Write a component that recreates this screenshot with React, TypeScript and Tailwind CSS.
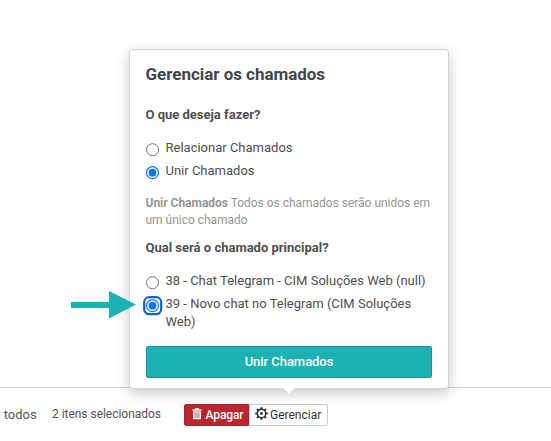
function Radio({ checked = false, focused = false }: { checked?: boolean; focused?: boolean }) {
  return (
    <svg viewBox="0 0 20 20" className="-ml-[3px] mt-[1px] h-5 w-5 shrink-0" role="radio" aria-checked={checked}>
      {focused && <rect x="1.2" y="1.2" width="17" height="17" rx="5.2" fill="#fff" stroke="#0f62d0" strokeWidth="2.2" />}
      <circle cx="9.5" cy="9.7" r="6" fill="#fff" stroke={checked ? "#0f75f5" : "#767676"} strokeWidth={checked ? 1.2 : 1} />
      {checked && <circle cx="9.5" cy="9.7" r="3.9" fill="#0f75ff" />}
    </svg>
  );
}

function Option({ text, checked, focused }: { text: string; checked?: boolean; focused?: boolean }) {
  return (
    <label className="flex items-start">
      <Radio checked={checked} focused={focused} />
      <span className="ml-[2.5px] text-[13px] leading-[18px] text-[#505050]">{text}</span>
    </label>
  );
}

function Popover() {
  return (
    <section className="absolute left-[129px] top-[49px] h-[340px] w-[320px] rounded-[4px] border border-[#d4d4d4] bg-white px-4 pt-3 shadow-[0_4px_14px_rgba(0,0,0,0.22)]">
      <h1 className="-ml-[0.5px] text-[17px] font-bold leading-6 tracking-[-0.03px] text-[#41464d]">Gerenciar os chamados</h1>
      <h2 className="-ml-[0.5px] mt-[19px] text-[13px] font-bold leading-5 tracking-[-0.01px] text-[#505050]">O que deseja fazer?</h2>
      <div className="mt-[14px] flex h-[42px] flex-col gap-[2px]">
        <Option text="Relacionar Chamados" />
        <Option text="Unir Chamados" checked />
      </div>
      <p className="-ml-[0.5px] mt-[14px] whitespace-nowrap text-[12px] leading-[17px] tracking-[-0.02px] text-[#969696]">
        <b>Unir Chamados</b> Todos os chamados serão unidos em
        <br />
        um único chamado
      </p>
      <h2 className="-ml-[0.5px] mt-[9px] text-[13px] font-bold leading-5 text-[#505050]">Qual será o chamado principal?</h2>
      <div className="mt-[14px] flex h-[60px] flex-col gap-[2px]">
        <Option text="38 - Chat Telegram - CIM Soluções Web (null)" />
        <Option text="39 - Novo chat no Telegram (CIM Soluções Web)" checked focused />
      </div>
      <button className="mt-[14px] block h-8 w-[286px] rounded-[2px] border border-[#16989a] bg-[#1cb2b2] text-[13px] font-medium tracking-[-0.05px] text-white">
        Unir Chamados
      </button>
      <svg viewBox="0 0 14 7" className="absolute left-[152px] top-[337px] h-[7px] w-[14px]">
        <path d="M0 0H14L7 6.5Z" fill="#fff" />
      </svg>
    </section>
  );
}

function TrashIcon() {
  return (
    <svg viewBox="0 0 10 12" className="-mt-[2px] h-3 w-[10px] shrink-0">
      <path d="M.4 1.4H2.9V.3H7.1V1.4H9.6V2.8H.4Z" fill="#fff" />
      <path d="M1 3.4H9V11.2H1Z" fill="#fff" />
      <path d="M3.1 4.4V10M5 4.4V10M6.9 4.4V10" stroke="#b8272d" strokeWidth="0.8" />
    </svg>
  );
}

function GearIcon() {
  return (
    <svg viewBox="0 0 12 12" className="-mt-[3px] h-[13px] w-[13px] shrink-0" fill="none" stroke="#333">
      <circle cx="6" cy="6" r="3.9" strokeWidth="1.3" />
      <circle cx="6" cy="6" r="1.3" fill="#333" stroke="none" />
      <path d="M6 .2V2M6 10V11.8M.2 6H2M10 6H11.8M1.9 1.9L3.2 3.2M8.8 8.8L10.1 10.1M1.9 10.1L3.2 8.8M8.8 3.2L10.1 1.9" strokeWidth="2" />
    </svg>
  );
}

export default function App() {
  return (
    <div className="relative flex h-[441px] w-[551px] flex-col overflow-hidden bg-white font-[Roboto,sans-serif]">
      <main className="flex-1" />
      <footer className="flex h-[54px] items-start border-t border-[#d2d2d2] pt-4">
        <span className="-ml-[4px] mt-[1px] w-[56px] whitespace-nowrap text-[13px] leading-5 text-[#555]">r todos</span>
        <span className="w-[132px] whitespace-nowrap text-[12px] leading-5 tracking-[-0.03px] text-[#555]">2 itens selecionados</span>
        <button className="flex h-[22px] w-[65px] items-center gap-1 rounded-l-[2px] border border-[#a9232a] bg-[#b8272d] pl-[6.5px] text-[12px] font-medium text-white">
          <TrashIcon />
          <span className="tracking-[-0.1px]">Apagar</span>
        </button>
        <button className="flex h-[22px] w-[79px] items-center gap-[2px] rounded-r-[2px] border border-[#ccc] bg-white pl-[5px] text-[12px] text-[#333]">
          <GearIcon />
          Gerenciar
        </button>
      </footer>
      <Popover />
      <svg viewBox="0 0 66 28" className="absolute left-[71px] top-[291px] h-7 w-[66px]" fill="#1cb2b2">
        <path d="M0 11H38V0L65 13.5L38 27.5V17H0Z" />
      </svg>
    </div>
  );
}
